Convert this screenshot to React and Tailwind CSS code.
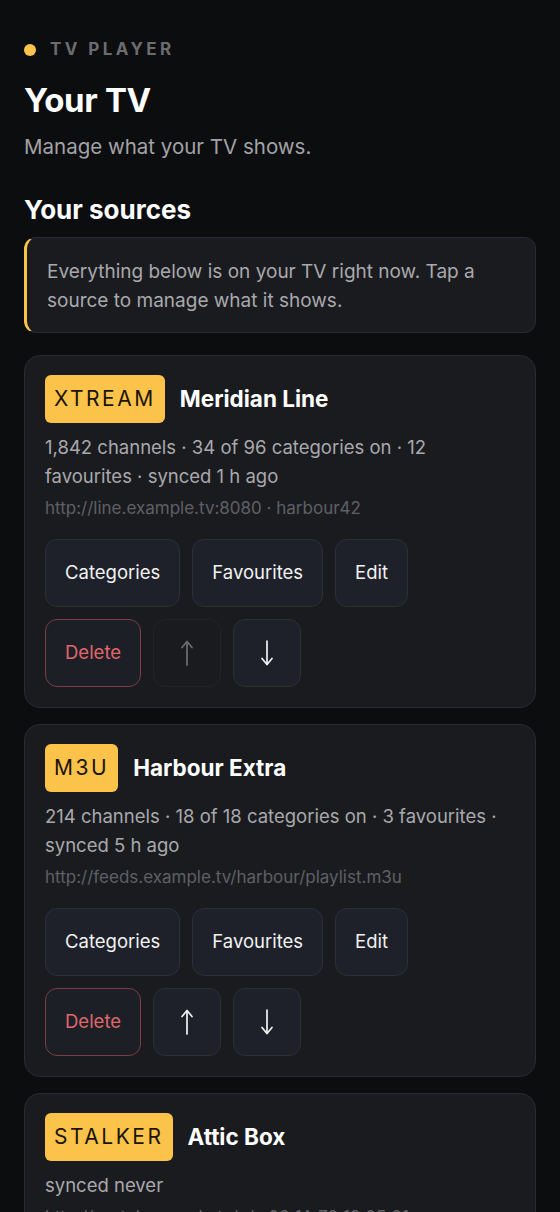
const sources = [
  {
    id: 1,
    kind: "XTREAM",
    name: "Meridian Line",
    meta: "1,842 channels · 34 of 96 categories on · 12 favourites · synced 1 h ago",
    url: "http://line.example.tv:8080 · harbour42",
    first: true,
  },
  {
    id: 2,
    kind: "M3U",
    name: "Harbour Extra",
    meta: "214 channels · 18 of 18 categories on · 3 favourites · synced 5 h ago",
    url: "http://feeds.example.tv/harbour/playlist.m3u",
  },
  {
    id: 3,
    kind: "STALKER",
    name: "Attic Box",
    meta: "synced never",
    url: "http://portal.example.tv/c/ · 00:1A:79:12:05:01",
    last: true,
  },
];

function Arrow({ down }) {
  return (
    <svg
      width="14"
      height="28"
      viewBox="0 0 14 28"
      fill="none"
      stroke="currentColor"
      strokeWidth="1.7"
      strokeLinecap="round"
      strokeLinejoin="round"
      className={down ? "rotate-180" : ""}
    >
      <path d="M7 3v23" />
      <path d="M2 8.5 7 2.5l5 6" />
    </svg>
  );
}

function Btn({ children, danger, disabled }) {
  const cls = danger
    ? "border-[#7d3d43] text-[#e0676c] bg-[#1d1f26]"
    : disabled
    ? "border-[#222329] text-[#6d6e73] bg-[#1a1b1f]"
    : "border-[#2c2f38] text-[#f2f2f2] bg-[#1e2129]";
  return (
    <button
      type="button"
      className={`h-[68px] min-w-[68px] px-[19px] flex items-center justify-center rounded-[12px] border text-[18.5px] ${cls}`}
    >
      {children}
    </button>
  );
}

function SourceCard({ source }) {
  return (
    <div className="rounded-[16px] border border-[#2a2b30] bg-[#1a1b1f] px-[20px] pt-[19px] pb-[20px]">
      <div className="flex items-center gap-[15px]">
        <span className="h-[48px] px-[9px] flex items-center rounded-[6px] bg-[#fcc34b] text-[#1a1407] text-[21px] tracking-[0.12em]">
          {source.kind}
        </span>
        <span className="text-[22.5px] font-bold text-white">{source.name}</span>
      </div>
      <p className="mt-[10px] text-[18.5px] leading-[29px] text-[#a9a9ad]">
        {source.meta}
      </p>
      <p className="mt-[5px] text-[17px] leading-[24px] text-[#5f6066]">
        {source.url}
      </p>
      <div className="mt-[19px] flex flex-wrap gap-[12px]">
        <Btn>Categories</Btn>
        <Btn>Favourites</Btn>
        <Btn>Edit</Btn>
      </div>
      <div className="mt-[12px] flex flex-wrap gap-[12px]">
        <Btn danger>Delete</Btn>
        <Btn disabled={source.first}>
          <Arrow />
        </Btn>
        <Btn disabled={source.last}>
          <Arrow down />
        </Btn>
      </div>
    </div>
  );
}

export default function App() {
  return (
    <div className="min-h-screen bg-[#0c0d0f] px-[24px] pt-[37px] pb-10 font-['Inter',sans-serif]">
      <div className="flex items-center gap-[14px]">
        <span className="w-[12px] h-[12px] rounded-full bg-[#fcc34b]" />
        <span className="text-[17px] font-bold tracking-[0.2em] text-[#6c6c70]">
          TV PLAYER
        </span>
      </div>
      <h1 className="mt-[17px] text-[33px] leading-[40px] font-bold text-white tracking-[-0.01em]">
        Your TV
      </h1>
      <p className="mt-[14px] text-[20.5px] leading-[26px] text-[#a3a3a7]">
        Manage what your TV shows.
      </p>
      <h2 className="mt-[35px] text-[26px] leading-[30px] font-bold text-white">
        Your sources
      </h2>
      <div className="mt-[12px] rounded-[12px] border border-[#2a2b30] border-l-[3px] border-l-[#fcc34b] bg-[#1a1b1f] pl-[20px] pr-[20px] pt-[19px] pb-[17px]">
        <p className="text-[19px] leading-[29px] text-[#a9a9ad]">
          Everything below is on your TV right now. Tap a source to manage what
          it shows.
        </p>
      </div>
      <div className="mt-[22px] flex flex-col gap-[16px]">
        {sources.map((s) => (
          <SourceCard key={s.id} source={s} />
        ))}
      </div>
    </div>
  );
}
